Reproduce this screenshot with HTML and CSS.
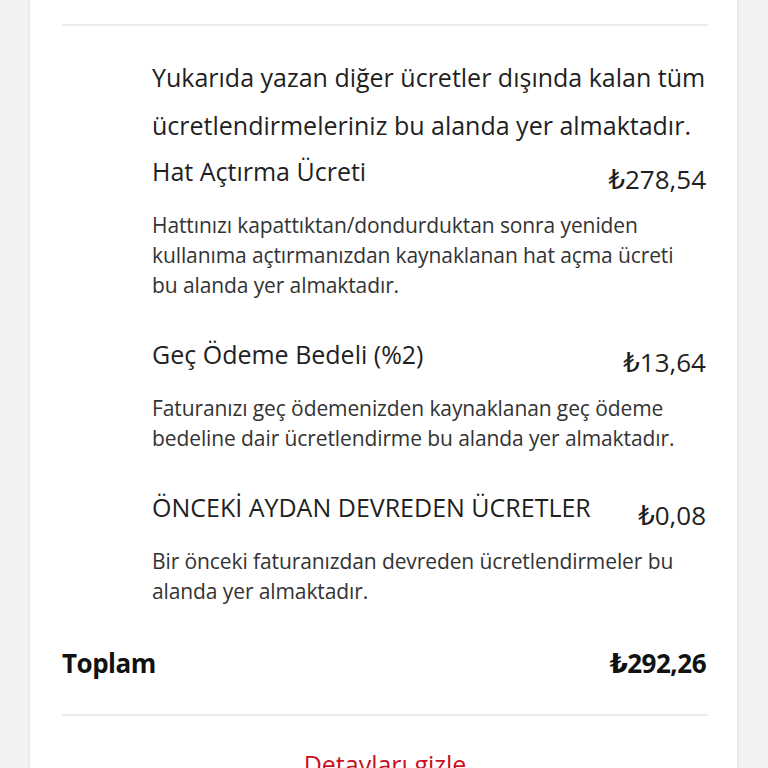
FILE: index.html
```html
<!DOCTYPE html>
<html lang="tr">
<head>
  <meta charset="UTF-8" />
  <meta name="viewport" content="width=device-width, initial-scale=1.0" />
  <title>Fatura Detayı</title>
  <link rel="stylesheet" href="styles.css">
</head>
<body>
  <main class="bill-card">
    <hr class="divider" />

    <section class="charges">
      <p class="charges-intro">Yukarıda yazan diğer ücretler dışında kalan tüm ücretlendirmeleriniz bu alanda yer almaktadır.</p>

      <div class="charge">
        <div class="charge-head">
          <span class="charge-title">Hat Açtırma Ücreti</span>
          <span class="charge-amount">₺278,54</span>
        </div>
        <p class="charge-desc">Hattınızı kapattıktan/dondurduktan sonra yeniden kullanıma açtırmanızdan kaynaklanan hat açma ücreti bu alanda yer almaktadır.</p>
      </div>

      <div class="charge">
        <div class="charge-head">
          <span class="charge-title">Geç Ödeme Bedeli (%2)</span>
          <span class="charge-amount">₺13,64</span>
        </div>
        <p class="charge-desc">Faturanızı geç ödemenizden kaynaklanan geç ödeme bedeline dair ücretlendirme bu alanda yer almaktadır.</p>
      </div>

      <div class="charge">
        <div class="charge-head">
          <span class="charge-title">ÖNCEKİ AYDAN DEVREDEN ÜCRETLER</span>
          <span class="charge-amount">₺0,08</span>
        </div>
        <p class="charge-desc">Bir önceki faturanızdan devreden ücretlendirmeler bu alanda yer almaktadır.</p>
      </div>
    </section>

    <div class="total">
      <span>Toplam</span>
      <span>₺292,26</span>
    </div>

    <hr class="divider" />

    <button class="toggle-details" type="button">Detayları gizle</button>
  </main>
</body>
</html>
```

FILE: styles.css
```css
body {
  margin: 0;
  background-color: #f2f2f2;
  font-family: "Open Sans", "DejaVu Sans", sans-serif;
  color: #1f1f1f;
}
.bill-card {
  margin: 0 31px 0 30px;
  padding: 24px 29px 0 32px;
  min-height: 768px;
  box-sizing: border-box;
  background-color: white;
  box-shadow: 0 0 3px rgba(0,0,0,0.12);
}
.divider {
  margin: 0;
  border: none;
  height: 2px;
  background-color: #ececec;
}
.charges {
  padding-left: 90px;
}
.charges-intro {
  margin: 27px 0 6px;
  font-size: 25px;
  line-height: 48px;
}
.charge {
  padding-bottom: 38px;
}
.charge:last-child {
  padding-bottom: 41px;
}
.charge-head {
  display: flex;
  justify-content: space-between;
  align-items: flex-start;
  font-size: 25px;
  line-height: 32px;
}
.charge-amount {
  margin-top: 8px;
  margin-right: 2px;
  font-size: 26px;
}
.charge-desc {
  margin: 15px 0 0;
  padding-right: 26px;
  font-size: 21px;
  line-height: 30px;
  letter-spacing: -0.1px;
  color: #333;
}
.total {
  display: flex;
  justify-content: space-between;
  margin-bottom: 35px;
  padding-right: 2px;
  font-size: 26px;
  line-height: 32px;
  font-weight: bold;
  letter-spacing: -0.5px;
  color: #111;
}
.toggle-details {
  display: block;
  margin: 24px auto 0;
  padding: 0;
  border: none;
  background: none;
  font-family: inherit;
  font-size: 25px;
  line-height: 48px;
  color: #c8101f;
  cursor: pointer;
}
```
